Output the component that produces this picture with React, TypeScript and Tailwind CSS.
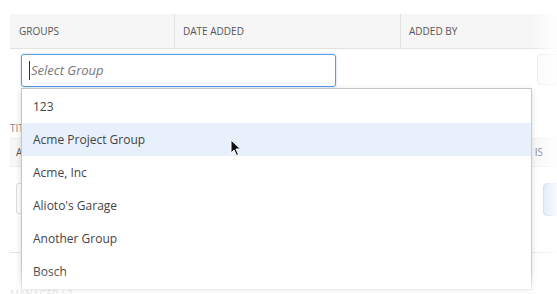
import React from "react";

const items = ["123", "Acme Project Group", "Acme, Inc", "Alioto's Garage", "Another Group", "Bosch"];

export default function App() {
  return (
    <div
      className="relative w-[557px] h-[294px] overflow-hidden bg-white text-[#444]"
      style={{ fontFamily: '"Open Sans", "Noto Sans", sans-serif' }}
    >
      {/* background page */}
      <div className="pt-[14px] pl-[10px]">
        <div className="flex h-[35px] bg-[#f6f6f6] border-b border-[#e2e2e2] text-[10px] text-[#555]">
          <div className="w-[165px] flex items-center pl-[9px] border-r border-[#e2e2e2]">GROUPS</div>
          <div className="w-[226px] flex items-center pl-[8px] border-r border-[#e2e2e2]">DATE ADDED</div>
          <div className="flex-1 flex items-center pl-[8px]">ADDED BY</div>
        </div>
        <div className="flex items-start pt-[5px] h-[40px]">
          <div className="ml-[11px] w-[315px] h-[33px] rounded-[3px] border border-[#5a9ae6] shadow-[0_0_2px_rgba(70,140,230,0.5)] flex items-center pl-[7px]">
            <span className="w-px h-[19px] bg-[#333]" />
            <span className="italic text-[13px] text-[#777] ml-[1px]">Select Group</span>
          </div>
          <div className="ml-auto w-[20px] h-[31px] rounded-l-[4px] border border-[#e4e4e4] bg-[#fafafa]" />
        </div>
        <div className="h-[49px] flex items-end pb-[2px] text-[10px] text-[#888]">TITLE</div>
        <div className="flex h-[29px] bg-[#f7f7f7] border-y border-[#ececec] text-[10px] text-[#555] items-center">
          <div className="pl-[6px]">A</div>
          <div className="ml-auto pr-[14px]">IS</div>
        </div>
        <div className="flex items-start pt-[16px] h-[86px] border-b border-[#e4e4e4]">
          <div className="ml-[6px] w-[200px] h-[31px] rounded-[3px] border border-[#dcdcdc]" />
          <div className="ml-auto w-[14px] h-[33px] rounded-l-[4px] bg-[#c9dcf6] border border-[#a9c6ee]" />
        </div>
        <div className="pt-[34px] text-[10px] text-[#999]">MANAGER / 2</div>
      </div>

      {/* dropdown */}
      <div className="absolute left-[21px] top-[88px] w-[511px] h-[202px] bg-white border border-[#c6c6c6] shadow-[0_2px_6px_rgba(0,0,0,0.15)] pt-px">
        {items.map((it, i) => (
          <div
            key={it}
            className={`h-[33px] flex items-center pl-[11px] text-[12px] text-[#444] ${i === 1 ? "bg-[#e8f0fb]" : ""}`}
          >
            {it}
          </div>
        ))}
      </div>

      {/* mouse cursor */}
      <svg className="absolute left-[230px] top-[139px]" width="12" height="18" viewBox="0 0 12 18">
        <path d="M1 1 L1 14 L4 11 L6.5 16.5 L8.5 15.5 L6 10 L10.5 10 Z" fill="#111" stroke="#fff" strokeWidth="1" strokeLinejoin="round" />
      </svg>

      {/* edge fades */}
      <div className="pointer-events-none absolute right-0 top-0 h-full w-[28px] bg-gradient-to-l from-white/90 to-white/0" />
      <div className="pointer-events-none absolute left-0 bottom-0 w-full h-[24px] bg-gradient-to-t from-white/80 to-white/0" />
    </div>
  );
}
